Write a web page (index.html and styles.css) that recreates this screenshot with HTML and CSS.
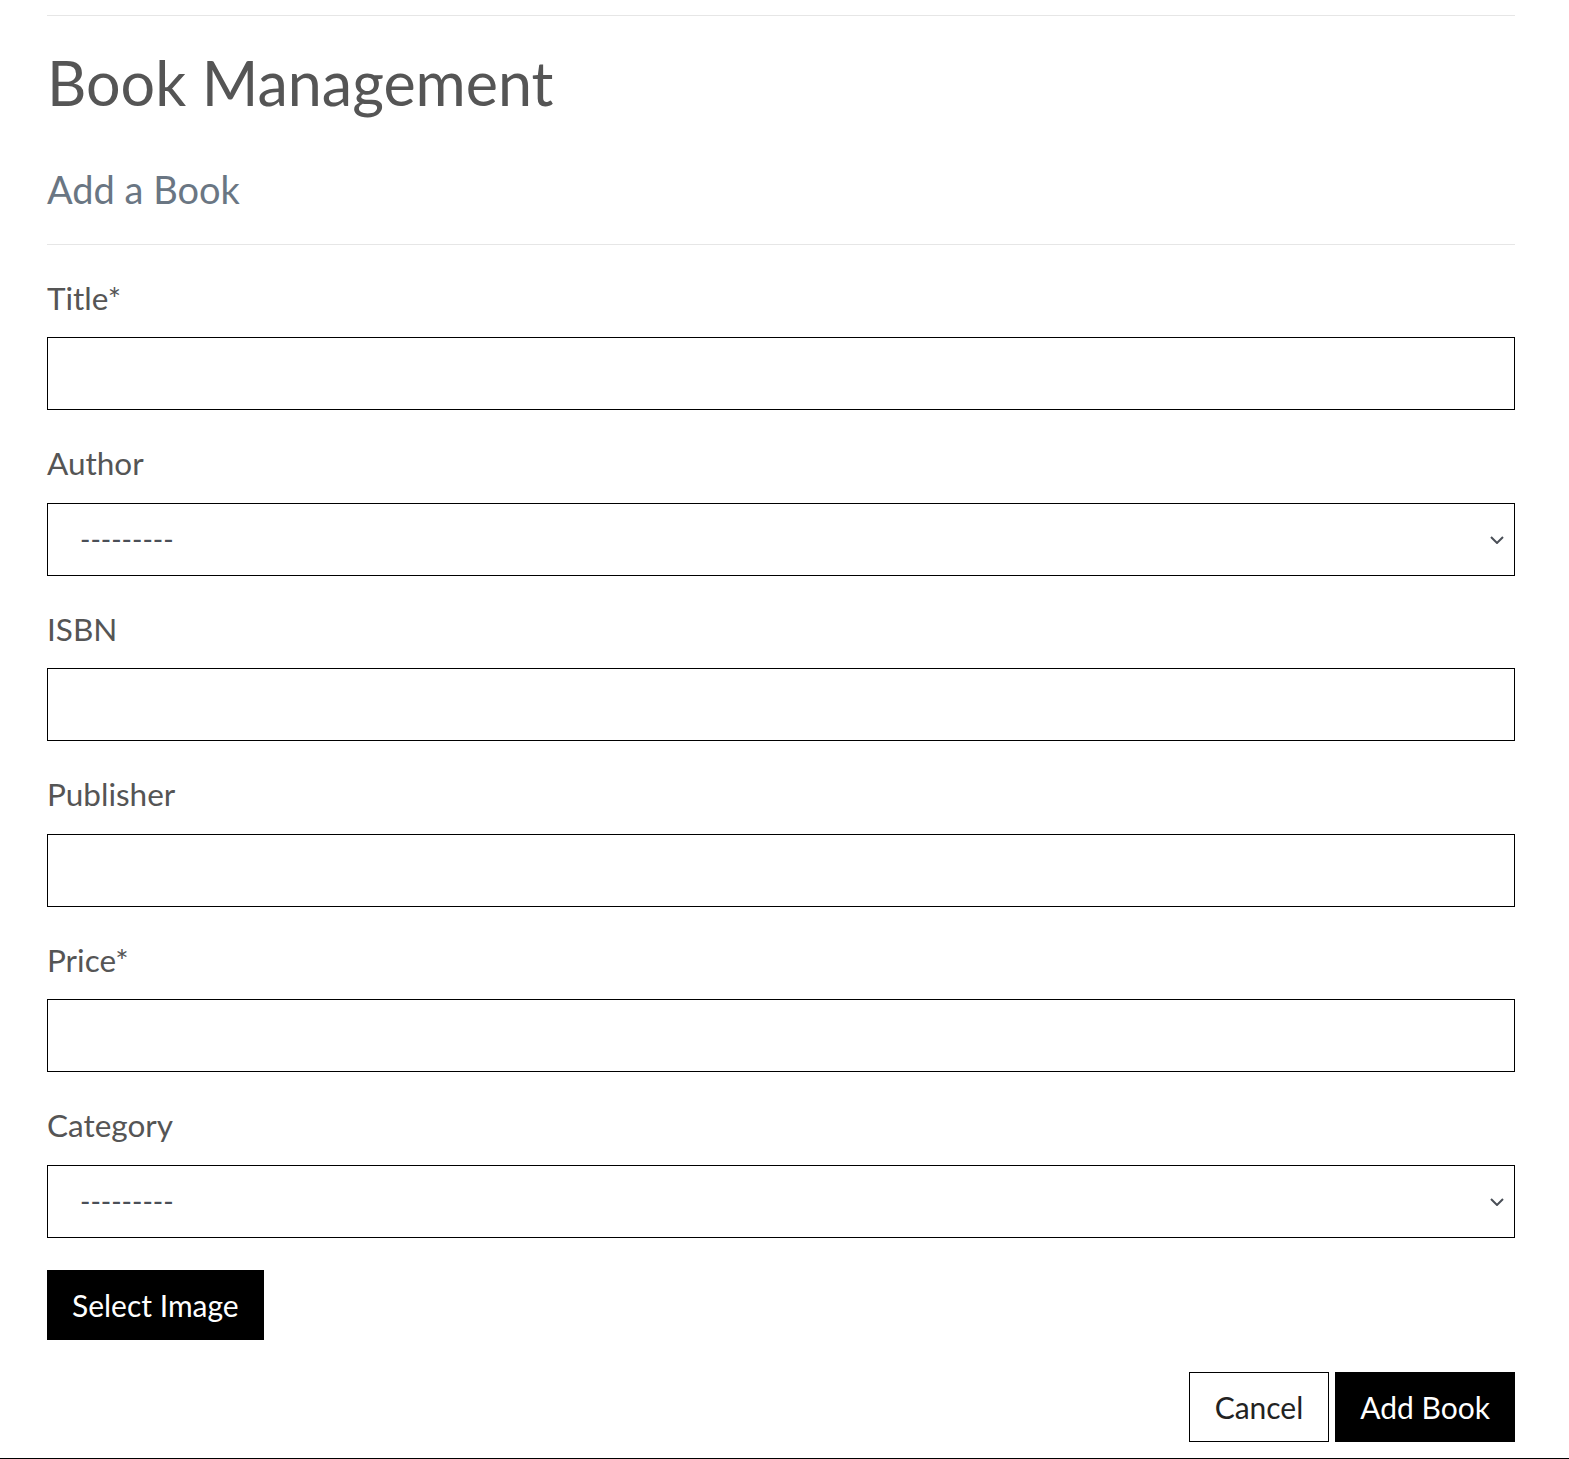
FILE: index.html
```html
<!DOCTYPE html>
<html lang="en">
<head>
<meta charset="utf-8">
<title>Book Management</title>
<link rel="stylesheet" href="styles.css">
</head>
<body>
<div class="page">
  <hr class="rule">
  <h1 class="title">Book Management</h1>
  <h2 class="subtitle">Add a Book</h2>
  <hr class="rule rule-form">
  <form class="form">
    <div class="field">
      <label class="label" for="title">Title*</label>
      <input class="input" id="title" type="text">
    </div>
    <div class="field">
      <label class="label" for="author">Author</label>
      <div class="select-wrap">
        <select class="input select" id="author"><option>---------</option></select>
        <svg class="chevron" width="14" height="8" viewBox="0 0 14 8"><path d="M1 1l6 6 6-6" fill="none" stroke="#4a4f57" stroke-width="2"/></svg>
      </div>
    </div>
    <div class="field">
      <label class="label" for="isbn">ISBN</label>
      <input class="input" id="isbn" type="text">
    </div>
    <div class="field">
      <label class="label" for="publisher">Publisher</label>
      <input class="input" id="publisher" type="text">
    </div>
    <div class="field">
      <label class="label" for="price">Price*</label>
      <input class="input" id="price" type="text">
    </div>
    <div class="field">
      <label class="label" for="category">Category</label>
      <div class="select-wrap">
        <select class="input select" id="category"><option>---------</option></select>
        <svg class="chevron" width="14" height="8" viewBox="0 0 14 8"><path d="M1 1l6 6 6-6" fill="none" stroke="#4a4f57" stroke-width="2"/></svg>
      </div>
    </div>
    <div class="image-row">
      <button type="button" class="btn btn-dark">Select Image</button>
    </div>
    <div class="actions">
      <button type="button" class="btn btn-light">Cancel</button>
      <button type="submit" class="btn btn-dark">Add Book</button>
    </div>
  </form>
</div>
<div class="footer-line"></div>
</body>
</html>
```

FILE: styles.css
```css
html, body {
  margin: 0;
  padding: 0;
  background: #fff;
}
body {
  font-family: Lato, "Open Sans", sans-serif;
  color: #555;
}
.page {
  padding: 15px 54px 0 47px;
}
.rule {
  border: 0;
  border-top: 1px solid #e6e6e6;
  margin: 0;
}
.title {
  margin: 28px 0 0;
  font-size: 61px;
  line-height: 77px;
  font-weight: 400;
  color: #555;
}
.subtitle {
  margin: 46px 0 0;
  font-size: 38px;
  line-height: 1.2;
  font-weight: 400;
  color: #6a7683;
}
.rule-form {
  margin-top: 31px;
}
.form {
  margin-top: 35px;
}
.field + .field {
  margin-top: 35.2px;
}
.label {
  display: block;
  font-size: 31.5px;
  line-height: 36px;
  color: #555;
  margin-bottom: 21.4px;
}
.input {
  display: block;
  box-sizing: border-box;
  width: 100%;
  height: 73px;
  border: 1px solid #000;
  border-radius: 0;
  background: #fff;
  margin: 0;
  padding: 0 32px;
  font-family: Lato, sans-serif;
  font-size: 28px;
  color: #4a4f57;
  outline: none;
}
.select-wrap {
  position: relative;
}
.select {
  appearance: none;
  -webkit-appearance: none;
}
.chevron {
  position: absolute;
  right: 11px;
  top: 33px;
  pointer-events: none;
}
.image-row {
  margin-top: 32px;
}
.btn {
  box-sizing: border-box;
  height: 70px;
  padding: 0 24px;
  font-family: Lato, sans-serif;
  font-size: 30px;
  line-height: 36px;
  border: 1px solid #000;
  border-radius: 0;
  cursor: pointer;
}
.btn-dark {
  background: #000;
  color: #fff;
}
.btn-light {
  background: #fff;
  color: #222;
  padding: 0 25px;
}
.actions {
  display: flex;
  justify-content: flex-end;
  gap: 6px;
  margin-top: 32px;
}
.footer-line {
  margin-top: 16px;
  border-top: 2px solid #000;
}
```
